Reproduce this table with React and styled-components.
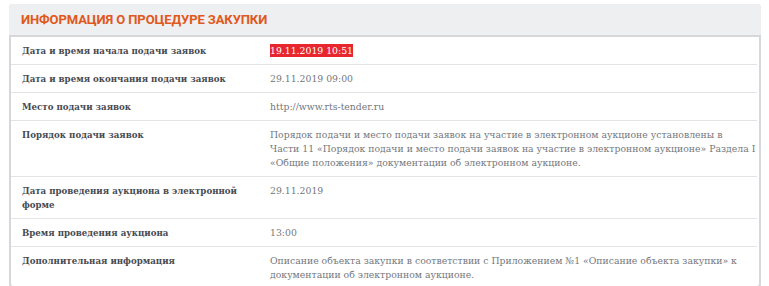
import React from "react";
import styled, { createGlobalStyle } from "styled-components";

const GlobalStyle = createGlobalStyle`
  html, body {
    margin: 0;
    padding: 0;
    background: #fff;
  }
  body {
    padding: 4px 8px 0 9px;
  }
`;

const Panel = styled.section`
  width: 752px;
  border-radius: 4px;
  overflow: hidden;
  box-shadow: inset 0 0 0 2px #d6d7db;
  background: #fff;
`;

const Header = styled.div`
  height: 31px;
  display: flex;
  align-items: center;
  padding: 0 12px;
  background: #eeeff1;
  border-bottom: 2px solid #d6d7db;
`;

const Title = styled.h2`
  margin: 0;
  font-family: Roboto, "Noto Sans", sans-serif;
  font-weight: 700;
  font-size: 13px;
  letter-spacing: -0.1px;
  color: #e0581b;
  text-transform: uppercase;
`;

const Table = styled.div`
  padding: 0 2px 2px;
`;

const Row = styled.div`
  display: grid;
  grid-template-columns: 259px 1fr;
  border-top: ${(p) => (p.first ? "none" : "1px solid #e3e4e7")};
  margin: 0 2px 0 0;

  &:last-child > div {
    padding-bottom: 4px;
  }
`;

const Label = styled.div`
  padding: 6.5px 12px 6.5px 11px;
  font-family: "DejaVu Serif Condensed", "DejaVu Serif", serif;
  font-stretch: condensed;
  font-size: 9.6px;
  line-height: 14px;
  font-weight: 700;
  color: #474a50;
`;

const Value = styled.div`
  padding: 6.5px 0 6.5px 0;
  font-family: "DejaVu Serif", "Liberation Serif", serif;
  font-size: 9.3px;
  line-height: 14px;
  color: #74777c;
  white-space: pre;
`;

const Mark = styled.span`
  background: #e8262e;
  color: #fff;
  padding: 1px 0;
`;

const rows = [
  ["Дата и время начала подачи заявок", <Mark>19.11.2019 10:51</Mark>],
  ["Дата и время окончания подачи заявок", "29.11.2019 09:00"],
  ["Место подачи заявок", "http://www.rts-tender.ru"],
  [
    "Порядок подачи заявок",
    "Порядок подачи и место подачи заявок на участие в электронном аукционе установлены в\nЧасти 11 «Порядок подачи и место подачи заявок на участие в электронном аукционе» Раздела I\n«Общие положения» документации об электронном аукционе.",
  ],
  ["Дата проведения аукциона в электронной форме", "29.11.2019"],
  ["Время проведения аукциона", "13:00"],
  [
    "Дополнительная информация",
    "Описание объекта закупки в соответствии с Приложением №1 «Описание объекта закупки» к\nдокументации об электронном аукционе.",
  ],
];

export default function App() {
  return (
    <>
      <GlobalStyle />
      <Panel>
        <Header>
          <Title>Информация о процедуре закупки</Title>
        </Header>
        <Table>
          {rows.map(([label, value], i) => (
            <Row key={i} first={i === 0}>
              <Label>{label}</Label>
              <Value>{value}</Value>
            </Row>
          ))}
        </Table>
      </Panel>
    </>
  );
}
